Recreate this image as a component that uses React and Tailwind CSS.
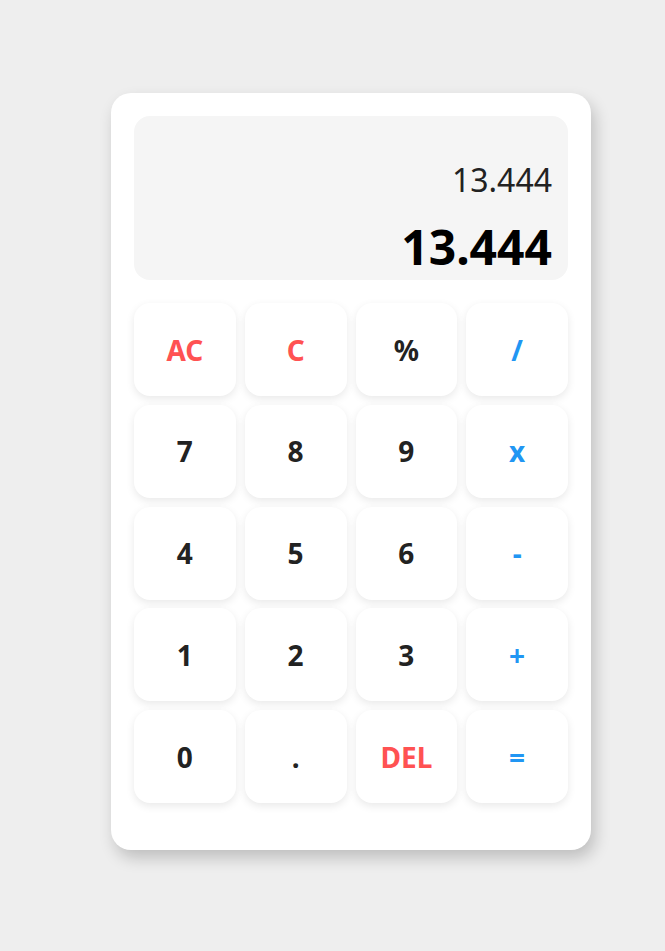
export default function App() {
  const rows = [
    [["AC", "red"], ["C", "red"], ["%", "dark"], ["/", "blue"]],
    [["7", "dark"], ["8", "dark"], ["9", "dark"], ["x", "blue"]],
    [["4", "dark"], ["5", "dark"], ["6", "dark"], ["-", "blue"]],
    [["1", "dark"], ["2", "dark"], ["3", "dark"], ["+", "blue"]],
    [["0", "dark"], [".", "dark"], ["DEL", "red"], ["=", "blue"]],
  ];
  const color = {
    red: "text-[#ff5252]",
    blue: "text-[#2196f3]",
    dark: "text-[#222222]",
  };
  return (
    <div
      className="min-h-[951px] w-full bg-[#eeeeee] pt-[93px] pl-[111px]"
      style={{ fontFamily: '"Noto Sans", "Open Sans", sans-serif' }}
    >
      <div className="w-[480px] rounded-[20px] bg-white px-[23px] pt-[23px] pb-[47px] shadow-[4px_8px_16px_rgba(0,0,0,0.2)]">
        <div className="flex h-[164px] flex-col items-end justify-end rounded-[16px] bg-[#f5f5f5] px-[16px] pb-[1px]">
          <div className="text-[32px] leading-[44px] text-[#222222]">13.444</div>
          <div className="mt-[13px] text-[48px] font-bold leading-[64px] text-black">13.444</div>
        </div>
        <div className="mt-[23px] grid grid-cols-4 gap-x-[9px] gap-y-[8.75px]">
          {rows.flat().map(([label, c], i) => (
            <div
              key={i}
              className={`flex h-[93px] items-center justify-center rounded-[16px] bg-white text-[28px] font-bold shadow-[0_3px_8px_rgba(0,0,0,0.09)] ${color[c]}`}
            >
              {label}
            </div>
          ))}
        </div>
      </div>
    </div>
  );
}
